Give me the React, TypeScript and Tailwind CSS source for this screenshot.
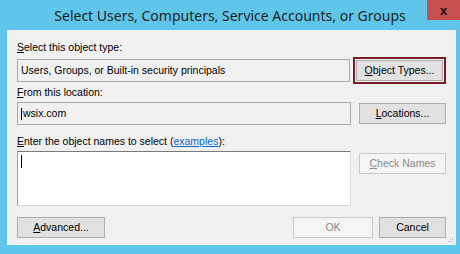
import React from "react";

function Btn({
  children,
  disabled,
  className = "",
}: {
  children: React.ReactNode;
  disabled?: boolean;
  className?: string;
}) {
  return (
    <div
      className={`h-[21px] flex items-center justify-center border text-[10.5px] ${
        disabled
          ? "border-[#c8c8c8] bg-[#f4f4f4] text-[#8a8a8a]"
          : "border-[#adadad] bg-[#e1e1e1] text-black"
      } ${className}`}
    >
      {children}
    </div>
  );
}

export default function App() {
  return (
    <div
      className="w-[460px] h-[254px] bg-[#5fc6ea] flex flex-col overflow-hidden"
      style={{ fontFamily: '"Liberation Sans", Arial, sans-serif' }}
    >
      {/* title bar */}
      <div className="h-[30px] flex items-start relative">
        <div
          className="flex-1 text-center text-[14px] text-[#1e1e1e] pt-[5px]"
          style={{ fontFamily: '"Noto Sans", "Open Sans", sans-serif' }}
        >
          Select Users, Computers, Service Accounts, or Groups
        </div>
        <div className="absolute right-0 top-0 w-[33px] h-[20px] bg-[#c75050] flex items-center justify-center text-[13px] font-bold text-[#111] leading-none">
          x
        </div>
      </div>

      {/* client area */}
      <div className="ml-[7px] mr-[4px] h-[215px] bg-[#f0f0f0] px-[10px] pt-[10px] text-[10.5px] text-black relative">
        <div className="leading-[14px]">
          <span className="underline">S</span>elect this object type:
        </div>
        <div className="mt-[3px] flex gap-[8px] items-center">
          <div className="w-[334px] h-[23px] border border-[#a9a9a9] bg-[#f0f0f0] flex items-center pl-[3px]">
            Users, Groups, or Built-in security principals
          </div>
          <div className="border-2 border-[#7a1a2a] p-px -ml-[5px]">
            <Btn className="w-[87px]">
              <span className="underline">O</span>bject Types...
            </Btn>
          </div>
        </div>

        <div className="leading-[14px] mt-[1px]">
          <span className="underline">F</span>rom this location:
        </div>
        <div className="mt-[3px] flex gap-[8px] items-center">
          <div className="w-[334px] h-[23px] border border-[#a9a9a9] bg-[#f0f0f0] flex items-center pl-[3px]">
            <span className="inline-block w-px h-[12px] bg-black mr-px" />
            wsix.com
          </div>
          <Btn className="w-[87px]">
            <span className="underline">L</span>ocations...
          </Btn>
        </div>

        <div className="leading-[14px] mt-[9px]">
          <span className="underline">E</span>nter the object names to select (
          <span className="text-[#0a64c8] underline">examples</span>):
        </div>
        <div className="mt-[3px] flex gap-[8px] items-start">
          <div className="w-[334px] h-[55px] border border-[#d9d9d9] border-t-[#7a7a7a] border-l-[#9a9a9a] bg-white pl-[3px] pt-[3px]">
            <span className="inline-block w-px h-[13px] bg-black" />
          </div>
          <Btn disabled className="w-[87px] mt-[2px]">
            <span className="underline">C</span>heck Names
          </Btn>
        </div>

        <div className="mt-[11px] flex items-center">
          <Btn className="w-[88px]">
            <span className="underline">A</span>dvanced...
          </Btn>
          <div className="flex-1" />
          <Btn disabled className="w-[80px]">
            OK
          </Btn>
          <Btn className="w-[67px] ml-[6px]">Cancel</Btn>
        </div>

        <svg
          className="absolute right-[2px] bottom-[2px]"
          width="6"
          height="6"
          viewBox="0 0 6 6"
        >
          <rect x="4" y="0" width="1" height="1" fill="#b8b8b8" />
          <rect x="2" y="2" width="1" height="1" fill="#b8b8b8" />
          <rect x="4" y="2" width="1" height="1" fill="#b8b8b8" />
          <rect x="0" y="4" width="1" height="1" fill="#b8b8b8" />
          <rect x="2" y="4" width="1" height="1" fill="#b8b8b8" />
          <rect x="4" y="4" width="1" height="1" fill="#b8b8b8" />
        </svg>
      </div>
    </div>
  );
}
